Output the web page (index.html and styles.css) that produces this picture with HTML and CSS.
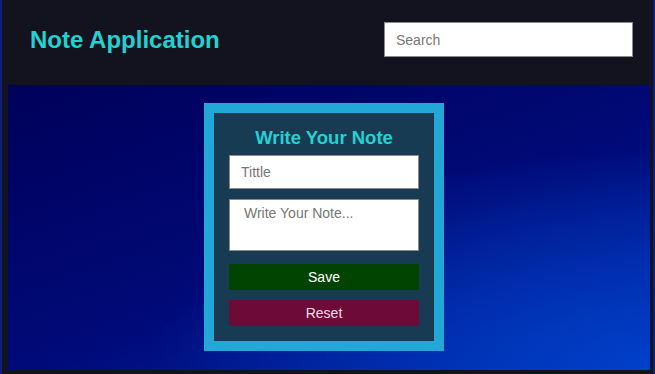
FILE: index.html
```html
<!DOCTYPE html>
<html lang="en">
<head>
  <meta charset="UTF-8" />
  <meta name="viewport" content="width=device-width, initial-scale=1.0" />
  <title>Note Application</title>
  <link rel="stylesheet" href="styles.css">
</head>
<body>
  <div class="app">
    <header class="topbar">
      <h1>Note Application</h1>
      <input type="text" class="search" placeholder="Search" />
    </header>

    <main class="stage">
      <form class="note-card">
        <h2>Write Your Note</h2>
        <input type="text" class="field" placeholder="Tittle" />
        <textarea class="field note-body" placeholder="Write Your Note..."></textarea>
        <button type="button" class="btn save">Save</button>
        <button type="reset" class="btn reset">Reset</button>
      </form>
    </main>
  </div>
</body>
</html>
```

FILE: styles.css
```css
* {
  box-sizing: border-box;
}

html, body {
  height: 100%;
}

body {
  margin: 0;
  font-family: "Liberation Sans", Arial, sans-serif;
  background: #0a1f7a;
  overflow: hidden;
}

.app {
  height: 100%;
  margin: 0 2px 0 2px;
  background: #13121f;
  display: flex;
  flex-direction: column;
}

.topbar {
  height: 85px;
  display: flex;
  align-items: center;
  justify-content: space-between;
  padding: 0 20px 6px 28px;
}

.topbar h1 {
  margin: 0;
  font-size: 24px;
  color: #22d2d0;
}

.search {
  width: 249px;
  height: 35px;
  padding: 0 11px;
  border: 1px solid #8a8a8a;
  font-family: inherit;
  font-size: 14px;
  outline: none;
}

.search::placeholder,
.field::placeholder {
  color: #777;
}

.stage {
  flex: 1;
  margin: 0 3px 4px 6px;
  padding: 18px 10px 0 0;
  display: flex;
  justify-content: center;
  align-items: flex-start;
  background:
    radial-gradient(ellipse at 100% 100%, #0040c8 0%, rgba(0, 40, 180, 0) 55%),
    linear-gradient(160deg, #00005a 0%, #000a78 55%, #0026a8 100%);
}

.note-card {
  width: 240px;
  border: 10px solid #22a8d6;
  background: #173b52;
  padding: 14px 15px 15px;
  display: flex;
  flex-direction: column;
}

.note-card h2 {
  margin: 0 0 6px;
  font-size: 18.5px;
  line-height: 22px;
  text-align: center;
  color: #22d2d0;
}

.field {
  width: 190px;
  border: 1px solid #8a8a8a;
  font-family: inherit;
  font-size: 14px;
  background: #fff;
  outline: none;
}

input.field {
  height: 34px;
  padding: 0 11px;
  margin-bottom: 10px;
}

.note-body {
  height: 52px;
  padding: 5px 14px;
  resize: none;
  margin-bottom: 13px;
}

.btn {
  width: 190px;
  height: 26px;
  border: none;
  font-family: inherit;
  font-size: 14px;
  color: #fff;
  cursor: pointer;
}

.save {
  background: #014401;
  margin-bottom: 10px;
}

.reset {
  background: #6d0a38;
  color: #f6dcec;
}
```
